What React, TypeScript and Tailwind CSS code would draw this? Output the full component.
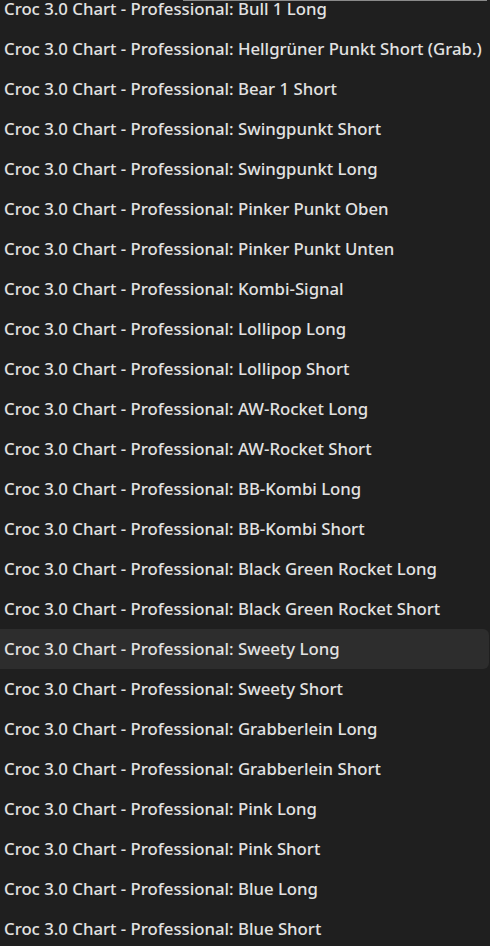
const items = [
  "Bull 1 Long",
  "Hellgrüner Punkt Short (Grab.)",
  "Bear 1 Short",
  "Swingpunkt Short",
  "Swingpunkt Long",
  "Pinker Punkt Oben",
  "Pinker Punkt Unten",
  "Kombi-Signal",
  "Lollipop Long",
  "Lollipop Short",
  "AW-Rocket Long",
  "AW-Rocket Short",
  "BB-Kombi Long",
  "BB-Kombi Short",
  "Black Green Rocket Long",
  "Black Green Rocket Short",
  "Sweety Long",
  "Sweety Short",
  "Grabberlein Long",
  "Grabberlein Short",
  "Pink Long",
  "Pink Short",
  "Blue Long",
  "Blue Short",
];

export default function App() {
  return (
    <div className="relative h-[946px] w-[490px] overflow-hidden bg-[#1f1f1f] font-['Noto_Sans',sans-serif]">
      {/* edge of the panel above */}
      <div className="absolute left-[183px] right-[3px] top-0 h-px bg-[#8a8a8a]" />
      <ul className="-mt-[11px] pr-px">
        {items.map((name) => (
          <li
            key={name}
            className={`flex h-10 items-center pl-1 text-[16.75px] font-medium text-[#e2e2e2] ${
              name === "Sweety Long" ? "rounded-r-md bg-[#2d2d2d]" : ""
            }`}
          >
            Croc 3.0 Chart - Professional: {name}
          </li>
        ))}
      </ul>
    </div>
  );
}
